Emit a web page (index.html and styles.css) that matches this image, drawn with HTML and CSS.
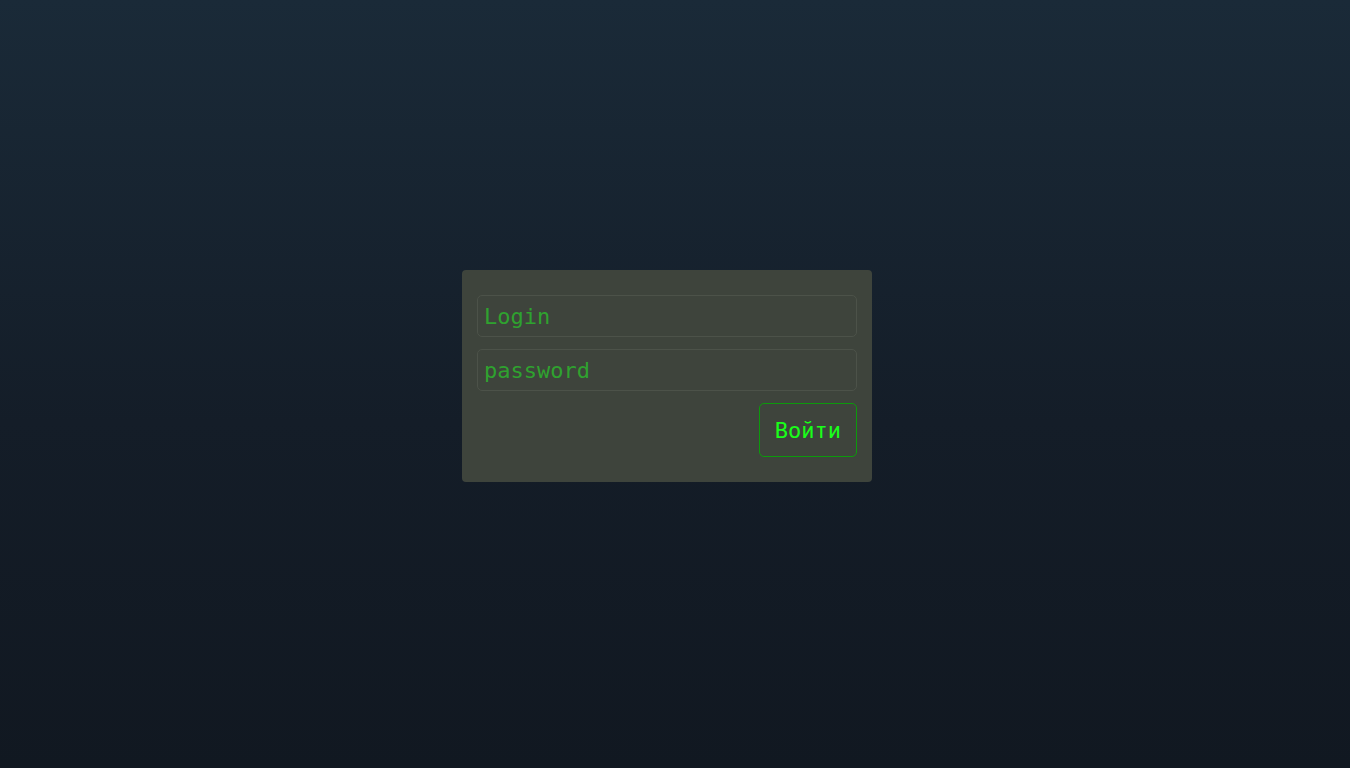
FILE: index.html
```html
<!DOCTYPE html>
<html lang="ru">
<head>
<meta charset="utf-8">
<title>Login</title>
<link rel="stylesheet" href="styles.css">
</head>
<body>
<main class="page">
  <form class="card">
    <input class="field" type="text" placeholder="Login">
    <input class="field" type="password" placeholder="password">
    <div class="actions">
      <button class="btn" type="button">Войти</button>
    </div>
  </form>
</main>
</body>
</html>
```

FILE: styles.css
```css
html, body {
  margin: 0;
  height: 100%;
}
body {
  background: linear-gradient(180deg, #1a2a38 0%, #141d28 55%, #111821 100%);
  font-family: "DejaVu Sans Mono", monospace;
}
.page {
  height: 100%;
  box-sizing: border-box;
  padding: 0 16px 16px 0;
  display: flex;
  align-items: center;
  justify-content: center;
}
.card {
  width: 410px;
  box-sizing: border-box;
  padding: 25px 15px;
  background: #3e443c;
  border-radius: 4px;
  display: flex;
  flex-direction: column;
  gap: 12px;
}
.field {
  height: 42px;
  box-sizing: border-box;
  margin: 0;
  padding: 0 6px;
  background: transparent;
  border: 1px solid #4c5249;
  border-radius: 5px;
  font-family: "DejaVu Sans Mono", monospace;
  font-size: 22px;
  color: #2fa22f;
  outline: none;
}
.field::placeholder {
  color: #2fa22f;
  opacity: 1;
}
.actions {
  display: flex;
  justify-content: flex-end;
}
.btn {
  height: 54px;
  box-sizing: border-box;
  padding: 0 15px;
  background: transparent;
  border: 1px solid #0c9a0c;
  border-radius: 5px;
  font-family: "DejaVu Sans Mono", monospace;
  font-size: 22px;
  color: #19ff19;
  cursor: pointer;
}
```
